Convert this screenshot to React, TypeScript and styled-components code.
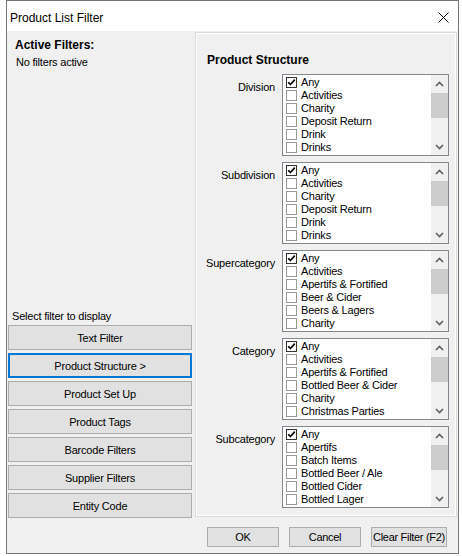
import React from "react";
import styled, { createGlobalStyle } from "styled-components";

const GlobalStyle = createGlobalStyle`
  body {
    margin: 0;
    background: #ffffff;
    font-family: "Liberation Sans", Arial, sans-serif;
    color: #000000;
  }
`;

const Window = styled.div`
  box-sizing: border-box;
  margin-left: 6px;
  width: 453px;
  height: 554px;
  border: 1px solid #767676;
  background: #f0f0f0;
  display: flex;
  flex-direction: column;
`;

const TitleBar = styled.div`
  height: 30px;
  box-sizing: border-box;
  background: #ffffff;
  display: flex;
  align-items: center;
  justify-content: space-between;
  padding: 3px 9px 0 3px;
  font-size: 12px;
`;

const CloseButton = styled.div`
  width: 12px;
  height: 12px;
  display: flex;
  align-items: center;
  justify-content: center;
`;

const Body = styled.div`
  flex: 1;
  display: flex;
  min-height: 0;
`;

const LeftColumn = styled.div`
  width: 188px;
  display: flex;
  flex-direction: column;
  padding: 7px 0 35px 1px;
  box-sizing: border-box;
`;

const ActiveTitle = styled.div`
  font-size: 12px;
  font-weight: bold;
  line-height: 14px;
  padding-left: 7px;
`;

const ActiveText = styled.div`
  font-size: 11px;
  letter-spacing: -0.2px;
  line-height: 14px;
  margin-top: 3px;
  padding-left: 8px;
`;

const SelectLabel = styled.div`
  margin-top: auto;
  font-size: 11px;
  letter-spacing: -0.2px;
  line-height: 14px;
  padding-left: 4px;
  margin-bottom: 2px;
`;

const FilterButton = styled.div<{ $focused?: boolean }>`
  box-sizing: border-box;
  width: 184px;
  height: 25px;
  margin-bottom: 3px;
  background: #e1e1e1;
  border: ${(p) => (p.$focused ? "2px solid #0078d7" : "1px solid #adadad")};
  display: flex;
  align-items: center;
  justify-content: center;
  font-size: 11px;
  letter-spacing: -0.2px;
  &:last-child {
    margin-bottom: 0;
  }
`;

const RightColumn = styled.div`
  width: 262px;
  display: flex;
  flex-direction: column;
  padding-top: 1px;
`;

const Panel = styled.div`
  box-sizing: border-box;
  height: 485px;
  border: 1px solid #dadada;
  box-shadow: inset 0 0 0 1px #ffffff;
  padding: 20px 0 0 1px;
`;

const PanelHeading = styled.div`
  font-size: 12px;
  font-weight: bold;
  line-height: 14px;
  padding-left: 10px;
  margin-bottom: 7px;
`;

const FilterRow = styled.div`
  display: flex;
  align-items: flex-start;
  margin-bottom: 6px;
`;

const RowLabel = styled.div`
  width: 78px;
  text-align: right;
  font-size: 11px;
  letter-spacing: -0.2px;
  line-height: 14px;
  padding-top: 6px;
  margin-right: 7px;
`;

const ListBox = styled.div`
  box-sizing: border-box;
  width: 167px;
  height: 82px;
  border: 1px solid #828790;
  background: #ffffff;
  display: flex;
  overflow: hidden;
`;

const Items = styled.div`
  flex: 1;
  padding: 1px 0 0 3px;
  overflow: hidden;
`;

const Item = styled.div`
  height: 13px;
  display: flex;
  align-items: flex-start;
  font-size: 11px;
  letter-spacing: -0.2px;
  line-height: 13px;
  white-space: nowrap;
`;

const CheckBox = styled.div<{ $checked?: boolean }>`
  box-sizing: border-box;
  width: 11px;
  height: 11px;
  margin: 1px 4px 0 0;
  border: 1px solid ${(p) => (p.$checked ? "#333333" : "#999999")};
  background: #ffffff;
  display: flex;
  align-items: center;
  justify-content: center;
  flex-shrink: 0;
`;

const ScrollBar = styled.div`
  width: 17px;
  background: #f0f0f0;
  display: flex;
  flex-direction: column;
`;

const ArrowBox = styled.div`
  height: 17px;
  display: flex;
  align-items: center;
  justify-content: center;
`;

const Thumb = styled.div`
  height: 25px;
  margin-top: 1px;
  background: #cdcdcd;
`;

const Track = styled.div`
  flex: 1;
`;

const Footer = styled.div`
  display: flex;
  padding-left: 12px;
  margin-top: 10px;
`;

const DialogButton = styled.div<{ $width: number }>`
  box-sizing: border-box;
  width: ${(p) => p.$width}px;
  height: 20px;
  margin-right: 10px;
  background: #e1e1e1;
  border: 1px solid #adadad;
  display: flex;
  align-items: center;
  justify-content: center;
  font-size: 11px;
  letter-spacing: -0.3px;
  white-space: nowrap;
  &:last-child {
    margin-right: 0;
  }
`;

const Chevron = ({ up }: { up?: boolean }) => (
  <svg width="9" height="6" viewBox="0 0 9 6">
    <path
      d={up ? "M1 5 L4.5 1.5 L8 5" : "M1 1 L4.5 4.5 L8 1"}
      fill="none"
      stroke="#606060"
      strokeWidth="1.6"
    />
  </svg>
);

const Tick = () => (
  <svg width="9" height="9" viewBox="0 0 9 9">
    <path d="M1.2 4.2 L3.4 6.6 L7.8 1.6" fill="none" stroke="#000" strokeWidth="1.7" />
  </svg>
);

interface IFilterListProps {
  label: string;
  options: string[];
}

// Checked list with a fake scrollbar; only the first six options fit, the
// next row peeks in at the bottom edge.
const FilterList = ({ label, options }: IFilterListProps) => (
  <FilterRow>
    <RowLabel>{label}</RowLabel>
    <ListBox>
      <Items>
        {options.map((o, i) => (
          <Item key={o}>
            <CheckBox $checked={i === 0}>{i === 0 && <Tick />}</CheckBox>
            {o}
          </Item>
        ))}
        <Item>
          <CheckBox />
        </Item>
      </Items>
      <ScrollBar>
        <ArrowBox>
          <Chevron up />
        </ArrowBox>
        <Thumb />
        <Track />
        <ArrowBox>
          <Chevron />
        </ArrowBox>
      </ScrollBar>
    </ListBox>
  </FilterRow>
);

const filterLists: IFilterListProps[] = [
  {
    label: "Division",
    options: ["Any", "Activities", "Charity", "Deposit Return", "Drink", "Drinks"],
  },
  {
    label: "Subdivision",
    options: ["Any", "Activities", "Charity", "Deposit Return", "Drink", "Drinks"],
  },
  {
    label: "Supercategory",
    options: ["Any", "Activities", "Apertifs & Fortified", "Beer & Cider", "Beers & Lagers", "Charity"],
  },
  {
    label: "Category",
    options: ["Any", "Activities", "Apertifs & Fortified", "Bottled Beer & Cider", "Charity", "Christmas Parties"],
  },
  {
    label: "Subcategory",
    options: ["Any", "Apertifs", "Batch Items", "Bottled Beer / Ale", "Bottled Cider", "Bottled Lager"],
  },
];

const filterButtons = [
  "Text Filter",
  "Product Structure >",
  "Product Set Up",
  "Product Tags",
  "Barcode Filters",
  "Supplier Filters",
  "Entity Code",
];

const App = () => {
  return (
    <>
      <GlobalStyle />
      <Window>
        <TitleBar>
          <span>Product List Filter</span>
          <CloseButton>
            <svg width="11" height="11" viewBox="0 0 11 11">
              <path d="M0.5 0.5 L10.5 10.5 M10.5 0.5 L0.5 10.5" stroke="#000" strokeWidth="1" />
            </svg>
          </CloseButton>
        </TitleBar>
        <Body>
          <LeftColumn>
            <ActiveTitle>Active Filters:</ActiveTitle>
            <ActiveText>No filters active</ActiveText>
            <SelectLabel>Select filter to display</SelectLabel>
            {filterButtons.map((b) => (
              <FilterButton key={b} $focused={b === "Product Structure >"}>
                {b}
              </FilterButton>
            ))}
          </LeftColumn>
          <RightColumn>
            <Panel>
              <PanelHeading>Product Structure</PanelHeading>
              {filterLists.map((f) => (
                <FilterList key={f.label} {...f} />
              ))}
            </Panel>
            <Footer>
              <DialogButton $width={72}>OK</DialogButton>
              <DialogButton $width={72}>Cancel</DialogButton>
              <DialogButton $width={76}>Clear Filter (F2)</DialogButton>
            </Footer>
          </RightColumn>
        </Body>
      </Window>
    </>
  );
};

export default App;
